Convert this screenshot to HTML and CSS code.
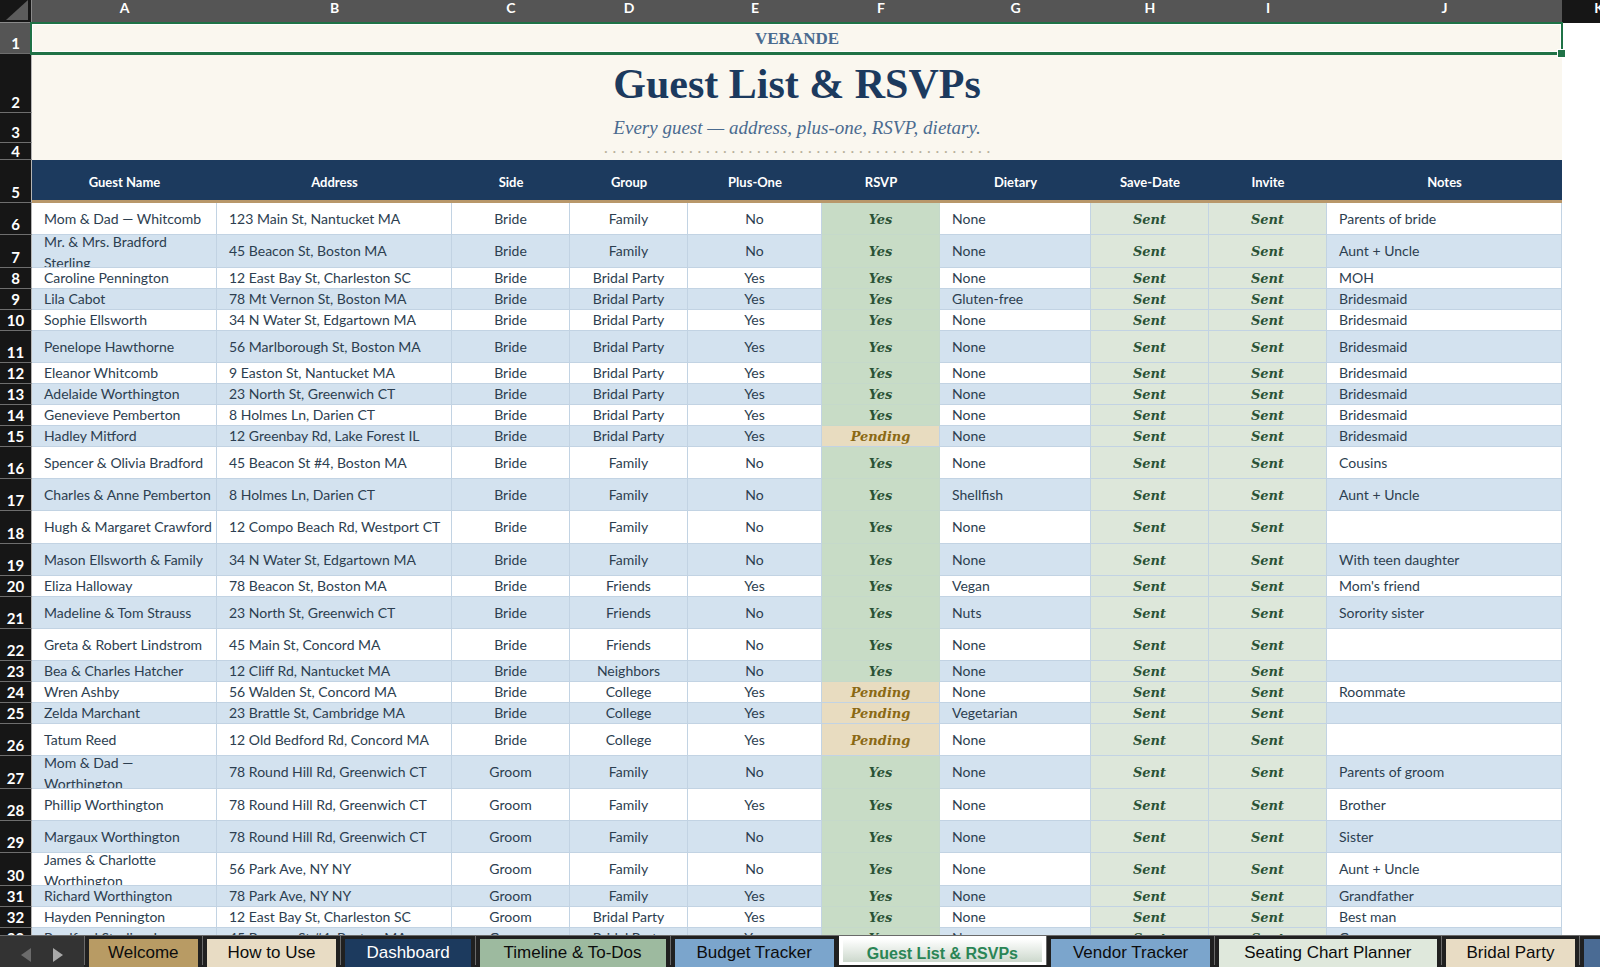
FILE: index.html
```html
<!DOCTYPE html>
<html lang="en">
<head>
    <meta charset="UTF-8">
    <meta name="viewport" content="width=device-width, initial-scale=1.0">
    <title>Guest List &amp; RSVPs</title>
    <link rel="stylesheet" href="styles.css">
</head>
<body>
    <main class="sheet">
        <table class="grid">
            <colgroup>
                <col class="col-num">
                <col class="col-name">
                <col class="col-wide">
                <col class="col-narrow">
                <col class="col-narrow">
                <col class="col-plus">
                <col class="col-narrow">
                <col class="col-diet">
                <col class="col-narrow">
                <col class="col-narrow">
                <col class="col-wide">
                <col>
            </colgroup>
            <thead>
                <tr class="letters">
                    <th class="corner"><svg width="22" height="20" viewBox="0 0 22 20"><path d="M22 0V20H0Z" fill="#5c5c5c"/></svg></th>
                    <th>A</th><th>B</th><th>C</th><th>D</th><th>E</th><th>F</th><th>G</th><th>H</th><th>I</th><th>J</th>
                    <th class="unselected">K</th>
                </tr>
            </thead>
            <tbody id="rows">
                <tr class="row-brand">
                    <th class="num current">1</th>
                    <td class="banner brand selected" colspan="10">VERANDE<span class="handle"></span></td>
                    <td></td>
                </tr>
                <tr class="row-title">
                    <th class="num">2</th>
                    <td class="banner title" colspan="10">Guest List &amp; RSVPs</td>
                    <td></td>
                </tr>
                <tr class="row-subtitle">
                    <th class="num">3</th>
                    <td class="banner subtitle" colspan="10">Every guest — address, plus-one, RSVP, dietary.</td>
                    <td></td>
                </tr>
                <tr class="row-dots">
                    <th class="num">4</th>
                    <td class="banner dots" colspan="10">. . . . . . . . . . . . . . . . . . . . . . . . . . . . . . . . . . . . . . . . . . . . . .</td>
                    <td></td>
                </tr>
                <tr class="row-fields">
                    <th class="num">5</th>
                    <th class="field">Guest Name</th>
                    <th class="field">Address</th>
                    <th class="field">Side</th>
                    <th class="field">Group</th>
                    <th class="field">Plus-One</th>
                    <th class="field">RSVP</th>
                    <th class="field">Dietary</th>
                    <th class="field">Save-Date</th>
                    <th class="field">Invite</th>
                    <th class="field">Notes</th>
                    <td></td>
                </tr>
            </tbody>
        </table>
    </main>

    <nav class="tab-bar">
        <div class="arrows">
            <button class="arrow" aria-label="Previous sheet"><svg width="10" height="14" viewBox="0 0 10 14"><path d="M10 0V14L0 7Z" fill="#6b6b6b"/></svg></button>
            <button class="arrow" aria-label="Next sheet"><svg width="10" height="14" viewBox="0 0 10 14"><path d="M0 0V14L10 7Z" fill="#a9a9a9"/></svg></button>
        </div>
        <button class="tab gold">Welcome</button>
        <button class="tab cream">How to Use</button>
        <button class="tab navy">Dashboard</button>
        <button class="tab sage">Timeline &amp; To-Dos</button>
        <button class="tab blue">Budget Tracker</button>
        <button class="tab active">Guest List &amp; RSVPs</button>
        <button class="tab blue">Vendor Tracker</button>
        <button class="tab mint">Seating Chart Planner</button>
        <button class="tab cream">Bridal Party</button>
        <button class="tab slate" aria-label="Next tab"></button>
    </nav>

    <script src="script.js"></script>
</body>
</html>
```

FILE: styles.css
```css
* {
    margin: 0;
    padding: 0;
    box-sizing: border-box;
}

body {
    display: flex;
    flex-direction: column;
    height: 100vh;
    overflow: hidden;
    background: #ffffff;
    color: #2c3e50;
    font-family: Lato, 'Liberation Sans', sans-serif;
    font-size: 14px;
}

button {
    border: none;
    background: none;
    cursor: pointer;
}

/* Sheet */
.sheet {
    flex: 1;
    min-height: 0;
    overflow: hidden;
}

.grid {
    width: 100%;
    min-width: 1636px;
    table-layout: fixed;
    border-spacing: 0;
}

.col-num { width: 32px; }
.col-name { width: 185px; }
.col-wide { width: 235px; }
.col-narrow { width: 118px; }
.col-plus { width: 134px; }
.col-diet { width: 151px; }

.letters th {
    height: 23px;
    padding-bottom: 8px;
    background: #555555;
    color: #ffffff;
    font-size: 14px;
    line-height: 15px;
}

.letters .corner {
    padding: 0 3px 2px 0;
    background: #161616;
    border-right: 1px solid #8a8a8a;
    border-bottom: 1px solid #8a8a8a;
    text-align: right;
}

.corner svg {
    display: block;
    margin-left: auto;
}

.letters .unselected {
    background: #161616;
}

.num {
    background: #161616;
    color: #ffffff;
    border-right: 1px solid #b5b5b5;
    border-bottom: 1px solid #6e6e6e;
    font-size: 15px;
    line-height: 20px;
    text-align: center;
    vertical-align: bottom;
}

.num.current {
    background: #555555;
}

/* Title block */
.banner {
    background: #faf7ef;
    text-align: center;
    white-space: nowrap;
    font-family: Georgia, 'Liberation Serif', serif;
}

.row-brand { height: 31px; }
.row-title { height: 59px; }
.row-subtitle { height: 30px; }
.row-dots { height: 17px; }
.row-fields { height: 43px; }

.brand {
    color: #4a6b8f;
    font-size: 17px;
    font-weight: bold;
    line-height: 20px;
}

.title {
    color: #1c3a5e;
    font-size: 42px;
    font-weight: bold;
    line-height: 48px;
}

.subtitle {
    color: #4a6b8f;
    font-size: 19px;
    font-style: italic;
    line-height: 24px;
}

.dots {
    color: #b8b09a;
    font-size: 17px;
    line-height: 10px;
    vertical-align: top;
}

.row-dots .num {
    line-height: 16px;
}

.selected {
    position: relative;
}

.selected::after {
    content: '';
    position: absolute;
    inset: -1px -1px -1px -2px;
    border: 2px solid #1f7246;
    border-bottom-width: 3px;
    box-shadow: inset 0 0 0 1px #ffffff;
}

.handle {
    position: absolute;
    right: -4px;
    bottom: -4px;
    z-index: 1;
    width: 9px;
    height: 9px;
    background: #1f7246;
    border: 1px solid #ffffff;
}

/* Guest rows */
.field {
    padding-top: 3px;
    background: #1c3a5e;
    color: #ffffff;
    border-bottom: 3px solid #b8976a;
    font-size: 13px;
    line-height: 16px;
}

.short { height: 21px; }
.tall { height: 32px; }
.taller,
.wrapped { height: 33px; }

.cell {
    border-right: 1px solid #c2d3e3;
    border-bottom: 1px solid #c2d3e3;
    text-align: center;
    line-height: 20px;
    white-space: nowrap;
}

.cell.left {
    padding-left: 12px;
    text-align: left;
}

.striped .cell {
    background: #d3e2ef;
}

.wrapped .clip {
    display: flex;
    align-items: center;
    height: 32px;
    padding: 2px 3px 0 0;
    overflow: hidden;
    line-height: 21px;
    white-space: normal;
}

.guest .status {
    padding-top: 2px;
    font-family: Georgia, 'DejaVu Serif', serif;
    font-size: 13px;
    font-style: italic;
    font-weight: bold;
    line-height: 18px;
    color: #2a5236;
}

.guest .yes {
    background: #c8dcc6;
    border-color: #c5d9ca;
}

.guest .sent {
    background: #dde7da;
}

.guest .pending {
    background: #e8dcc0;
    color: #8b6914;
}

/* Sheet tabs */
.tab-bar {
    display: flex;
    flex: none;
    height: 32px;
    overflow: hidden;
    background: #202020;
    border-top: 1px solid #6a6a6a;
}

.arrows {
    display: flex;
    flex: none;
    align-items: center;
    justify-content: center;
    gap: 22px;
    width: 84px;
    background: #333333;
}

.arrow {
    display: flex;
    padding-top: 6px;
}

.tab {
    position: relative;
    flex: none;
    padding: 0 21px;
    border: solid #202020;
    border-width: 3px 4px 0 5px;
    color: #0c0c0c;
    font-family: 'Liberation Sans', sans-serif;
    font-size: 17px;
    line-height: 28px;
    white-space: nowrap;
}

/* thin divider between neighbouring tabs */
.tab::before {
    content: '';
    position: absolute;
    left: -5px;
    top: -3px;
    bottom: 2px;
    width: 1px;
    background: #6a6a6a;
}

.gold { padding: 0 19px; background: #b89b64; }
.cream { background: #e8dcc4; }
.navy { background: #1c3a5e; color: #ffffff; }
.sage { padding: 0 24px; background: #9dba9f; }
.blue { padding: 0 22px; background: #7ba5cc; }
.mint { padding: 0 25px; background: #dfe8dc; }
.slate { background: #4a6b94; }

.tab.active {
    margin: -1px 0 2px 1px;
    padding: 5px 24px 0;
    border: 4px solid #ffffff;
    border-bottom-width: 3px;
    background: linear-gradient(#ffffff, #ccd8cc);
    color: #2a8556;
    font-size: 16px;
    font-weight: bold;
    line-height: 20px;
}

.tab.active::before {
    display: none;
}
```

FILE: script.js
```js
// height, name, address, side, group, plus-one, rsvp, dietary, notes
const guests = [
    ['tall', 'Mom & Dad — Whitcomb', '123 Main St, Nantucket MA', 'Bride', 'Family', 'No', 'Yes', 'None', 'Parents of bride'],
    ['wrapped', 'Mr. & Mrs. Bradford Sterling', '45 Beacon St, Boston MA', 'Bride', 'Family', 'No', 'Yes', 'None', 'Aunt + Uncle'],
    ['short', 'Caroline Pennington', '12 East Bay St, Charleston SC', 'Bride', 'Bridal Party', 'Yes', 'Yes', 'None', 'MOH'],
    ['short', 'Lila Cabot', '78 Mt Vernon St, Boston MA', 'Bride', 'Bridal Party', 'Yes', 'Yes', 'Gluten-free', 'Bridesmaid'],
    ['short', 'Sophie Ellsworth', '34 N Water St, Edgartown MA', 'Bride', 'Bridal Party', 'Yes', 'Yes', 'None', 'Bridesmaid'],
    ['tall', 'Penelope Hawthorne', '56 Marlborough St, Boston MA', 'Bride', 'Bridal Party', 'Yes', 'Yes', 'None', 'Bridesmaid'],
    ['short', 'Eleanor Whitcomb', '9 Easton St, Nantucket MA', 'Bride', 'Bridal Party', 'Yes', 'Yes', 'None', 'Bridesmaid'],
    ['short', 'Adelaide Worthington', '23 North St, Greenwich CT', 'Bride', 'Bridal Party', 'Yes', 'Yes', 'None', 'Bridesmaid'],
    ['short', 'Genevieve Pemberton', '8 Holmes Ln, Darien CT', 'Bride', 'Bridal Party', 'Yes', 'Yes', 'None', 'Bridesmaid'],
    ['short', 'Hadley Mitford', '12 Greenbay Rd, Lake Forest IL', 'Bride', 'Bridal Party', 'Yes', 'Pending', 'None', 'Bridesmaid'],
    ['tall', 'Spencer & Olivia Bradford', '45 Beacon St #4, Boston MA', 'Bride', 'Family', 'No', 'Yes', 'None', 'Cousins'],
    ['tall', 'Charles & Anne Pemberton', '8 Holmes Ln, Darien CT', 'Bride', 'Family', 'No', 'Yes', 'Shellfish', 'Aunt + Uncle'],
    ['taller', 'Hugh & Margaret Crawford', '12 Compo Beach Rd, Westport CT', 'Bride', 'Family', 'No', 'Yes', 'None', ''],
    ['tall', 'Mason Ellsworth & Family', '34 N Water St, Edgartown MA', 'Bride', 'Family', 'No', 'Yes', 'None', 'With teen daughter'],
    ['short', 'Eliza Halloway', '78 Beacon St, Boston MA', 'Bride', 'Friends', 'Yes', 'Yes', 'Vegan', "Mom's friend"],
    ['tall', 'Madeline & Tom Strauss', '23 North St, Greenwich CT', 'Bride', 'Friends', 'No', 'Yes', 'Nuts', 'Sorority sister'],
    ['tall', 'Greta & Robert Lindstrom', '45 Main St, Concord MA', 'Bride', 'Friends', 'No', 'Yes', 'None', ''],
    ['short', 'Bea & Charles Hatcher', '12 Cliff Rd, Nantucket MA', 'Bride', 'Neighbors', 'No', 'Yes', 'None', ''],
    ['short', 'Wren Ashby', '56 Walden St, Concord MA', 'Bride', 'College', 'Yes', 'Pending', 'None', 'Roommate'],
    ['short', 'Zelda Marchant', '23 Brattle St, Cambridge MA', 'Bride', 'College', 'Yes', 'Pending', 'Vegetarian', ''],
    ['tall', 'Tatum Reed', '12 Old Bedford Rd, Concord MA', 'Bride', 'College', 'Yes', 'Pending', 'None', ''],
    ['wrapped', 'Mom & Dad — Worthington', '78 Round Hill Rd, Greenwich CT', 'Groom', 'Family', 'No', 'Yes', 'None', 'Parents of groom'],
    ['tall', 'Phillip Worthington', '78 Round Hill Rd, Greenwich CT', 'Groom', 'Family', 'Yes', 'Yes', 'None', 'Brother'],
    ['tall', 'Margaux Worthington', '78 Round Hill Rd, Greenwich CT', 'Groom', 'Family', 'No', 'Yes', 'None', 'Sister'],
    ['wrapped', 'James & Charlotte Worthington', '56 Park Ave, NY NY', 'Groom', 'Family', 'No', 'Yes', 'None', 'Aunt + Uncle'],
    ['short', 'Richard Worthington', '78 Park Ave, NY NY', 'Groom', 'Family', 'Yes', 'Yes', 'None', 'Grandfather'],
    ['short', 'Hayden Pennington', '12 East Bay St, Charleston SC', 'Groom', 'Bridal Party', 'Yes', 'Yes', 'None', 'Best man'],
    ['short', 'Bradford Sterling Jr.', '45 Beacon St #4, Boston MA', 'Groom', 'Bridal Party', 'Yes', 'Yes', 'None', 'Groomsman']
];

const firstRow = 6;
const rows = document.getElementById('rows');

function addCell(tr, text, classes) {
    const td = document.createElement('td');
    td.className = 'cell ' + classes;
    td.textContent = text;
    tr.appendChild(td);
    return td;
}

guests.forEach((guest, i) => {
    const [height, name, address, side, group, plusOne, rsvp, dietary, notes] = guest;
    const tr = document.createElement('tr');
    tr.className = 'guest ' + height + (i % 2 ? ' striped' : '');

    const num = document.createElement('th');
    num.className = 'num';
    num.textContent = firstRow + i;
    tr.appendChild(num);

    const nameCell = addCell(tr, '', 'left');
    const clip = document.createElement('div');
    clip.className = 'clip';
    clip.textContent = name;
    nameCell.appendChild(clip);

    addCell(tr, address, 'left');
    addCell(tr, side, '');
    addCell(tr, group, '');
    addCell(tr, plusOne, '');
    addCell(tr, rsvp, 'status ' + rsvp.toLowerCase());
    addCell(tr, dietary, 'left');
    addCell(tr, 'Sent', 'status sent');
    addCell(tr, 'Sent', 'status sent');
    addCell(tr, notes, 'left');
    tr.appendChild(document.createElement('td'));
    rows.appendChild(tr);
});
```
